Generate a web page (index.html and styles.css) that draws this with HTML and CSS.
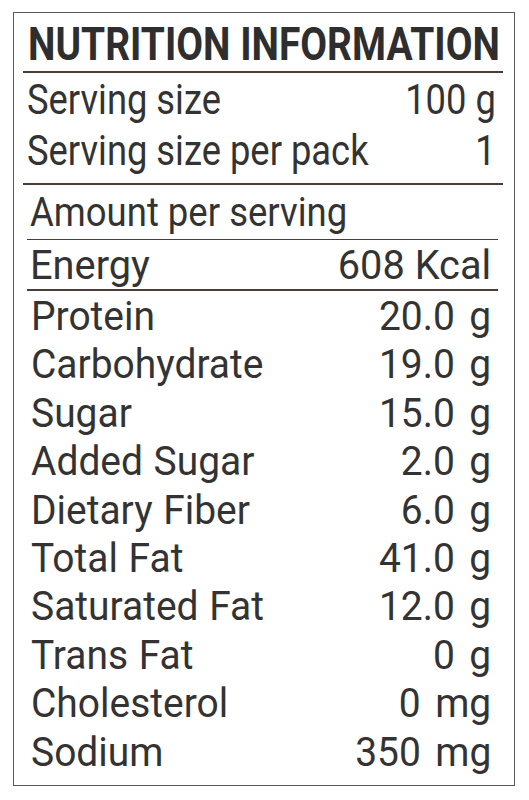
FILE: index.html
```html
<!DOCTYPE html>
<html lang="en">
<head>
<meta charset="utf-8">
<title>Nutrition Information</title>
<link rel="stylesheet" href="styles.css">
</head>
<body>
<div class="label">
  <div class="title"><span class="t">NUTRITION INFORMATION</span></div>
  <div class="serving">
    <div class="row srow"><span class="t l">Serving size</span><span class="t r">100 g</span></div>
    <div class="row srow"><span class="t l">Serving size per pack</span><span class="t r">1</span></div>
  </div>
  <div class="amount"><span class="t l">Amount per serving</span></div>
  <div class="row energy"><span class="t l">Energy</span><span class="t r">608 Kcal</span></div>
  <div class="list">
    <div class="row nrow"><span class="t l">Protein</span><span class="t r">20.0 g</span></div>
    <div class="row nrow"><span class="t l">Carbohydrate</span><span class="t r">19.0 g</span></div>
    <div class="row nrow"><span class="t l">Sugar</span><span class="t r">15.0 g</span></div>
    <div class="row nrow"><span class="t l">Added Sugar</span><span class="t r">2.0 g</span></div>
    <div class="row nrow"><span class="t l">Dietary Fiber</span><span class="t r">6.0 g</span></div>
    <div class="row nrow"><span class="t l">Total Fat</span><span class="t r">41.0 g</span></div>
    <div class="row nrow"><span class="t l">Saturated Fat</span><span class="t r">12.0 g</span></div>
    <div class="row nrow"><span class="t l">Trans Fat</span><span class="t r">0 g</span></div>
    <div class="row nrow"><span class="t l">Cholesterol</span><span class="t r">0 mg</span></div>
    <div class="row nrow"><span class="t l">Sodium</span><span class="t r">350 mg</span></div>
  </div>
</div>
</body>
</html>
```

FILE: styles.css
```css
html, body {
  margin: 0;
  padding: 0;
  background: #ffffff;
}

body {
  font-family: Roboto, "Liberation Sans", sans-serif;
  color: #333333;
}

.label {
  box-sizing: border-box;
  margin: 12px 0 0 13px;
  width: 502px;
  height: 774px;
  border: 1px solid #5a5a5a;
  overflow: hidden;
}

.t {
  display: inline-block;
  white-space: pre;
}

.l {
  transform-origin: left center;
}

.r {
  transform-origin: right center;
}

.title {
  margin: 0 11px 0 9px;
  padding: 4px 0 0 5px;
  height: 54px;
  line-height: 54px;
  font-size: 46px;
  font-weight: 700;
  color: #2e2e2e;
  border-bottom: 2px solid #4a3c38;
  overflow: hidden;
}

.title .t {
  transform: scaleX(0.845);
  transform-origin: left center;
}

.row {
  display: flex;
  justify-content: space-between;
  align-items: baseline;
}

.serving {
  margin: 0 11px 0 9px;
  padding: 1px 7px 7px 4px;
  border-bottom: 2px solid #4a3c38;
}

.srow {
  height: 51px;
  line-height: 51px;
  font-size: 42px;
}

.srow .t {
  transform: scaleX(0.865);
}

.amount {
  margin: 0 16px 0 13px;
  padding: 0 0 0 3px;
  height: 54px;
  line-height: 54px;
  font-size: 41px;
  border-bottom: 1px solid #4a3c38;
}

.amount .t {
  transform: scaleX(0.89);
}

.energy {
  margin: 0 16px 0 13px;
  padding: 1px 7px 0 3px;
  height: 48px;
  line-height: 48px;
  font-size: 41px;
  border-bottom: 2px solid #4a3c38;
}

.energy .t {
  transform: scaleX(0.97);
}

.list {
  padding: 1px 23px 0 17px;
}

.nrow {
  height: 48.4px;
  line-height: 48.4px;
  font-size: 41px;
}

.nrow .l {
  transform: scaleX(0.95);
  word-spacing: 1px;
}

.nrow .r {
  transform: scaleX(0.95);
  word-spacing: 5px;
}
```
